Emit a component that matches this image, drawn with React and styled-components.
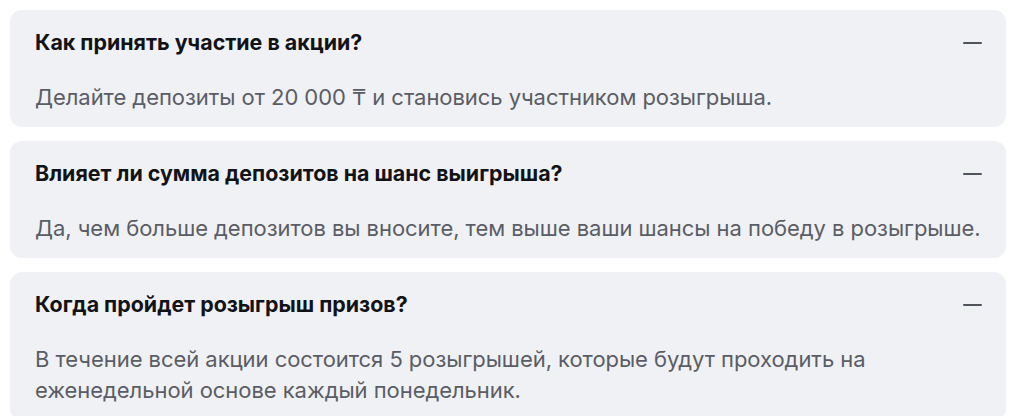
import styled, { createGlobalStyle } from "styled-components";

const GlobalStyle = createGlobalStyle`
  body {
    margin: 0;
    background: #ffffff;
    font-family: Inter, "Noto Sans", sans-serif;
  }
`;

const FaqList = styled.div`
  display: flex;
  flex-direction: column;
  gap: 14px;
  padding: 10px 18px 10px 10px;
`;

const Card = styled.div`
  background: #f0f1f4;
  border-radius: 12px;
  padding: 20px 24px 14px 25px;
`;

const Header = styled.div`
  display: flex;
  align-items: center;
  justify-content: space-between;
  gap: 20px;
`;

const Question = styled.div`
  font-size: 21.4px;
  line-height: 25px;
  font-weight: 700;
  color: #121316;
`;

const Minus = styled.span`
  flex: none;
  width: 19px;
  height: 2px;
  border-radius: 1px;
  background: #50545c;
`;

const Answer = styled.div`
  margin: 27px -16px 0 0;
  font-size: 22px;
  line-height: 31px;
  letter-spacing: -0.05px;
  color: #5a5d65;
`;

const faq = [
  {
    q: "Как принять участие в акции?",
    a: "Делайте депозиты от 20 000 ₸ и становись участником розыгрыша.",
  },
  {
    q: "Влияет ли сумма депозитов на шанс выигрыша?",
    a: "Да, чем больше депозитов вы вносите, тем выше ваши шансы на победу в розыгрыше.",
  },
  {
    q: "Когда пройдет розыгрыш призов?",
    a: "В течение всей акции состоится 5 розыгрышей, которые будут проходить на еженедельной основе каждый понедельник.",
  },
];

const App = () => {
  return (
    <>
      <GlobalStyle />
      <FaqList>
        {faq.map((item, k) => (
          <Card key={k}>
            <Header>
              <Question>{item.q}</Question>
              <Minus />
            </Header>
            <Answer>{item.a}</Answer>
          </Card>
        ))}
      </FaqList>
    </>
  );
};

export default App;
